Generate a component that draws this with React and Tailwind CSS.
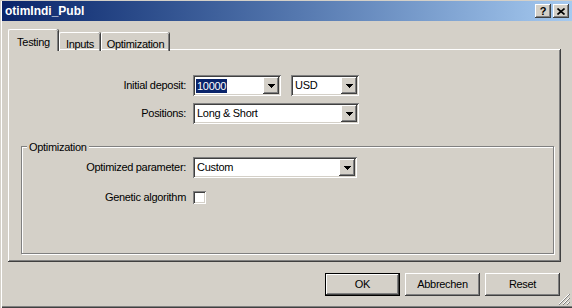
import React from "react";

const raised =
  "shadow-[inset_-1px_-1px_0_#404040,inset_1px_1px_0_#ffffff,inset_-2px_-2px_0_#808080,inset_2px_2px_0_#D4D0C8]";
const sunken =
  "shadow-[inset_1px_1px_0_#808080,inset_-1px_-1px_0_#ffffff,inset_2px_2px_0_#404040,inset_-2px_-2px_0_#D4D0C8]";

function Arrow() {
  return (
    <svg width="7" height="4" viewBox="0 0 7 4">
      <path d="M0 0h7v1H0zM1 1h5v1H1zM2 2h3v1H2zM3 3h1v1H3z" fill="#000" />
    </svg>
  );
}

function Combo({ className, value, selected }) {
  return (
    <div className={`flex h-[21px] items-stretch bg-white p-[2px] ${sunken} ${className}`}>
      <div className="flex flex-1 items-center pl-[1px]">
        {selected ? (
          <span className="bg-[#0A246A] px-[1px] leading-[14px] text-white">{value}</span>
        ) : (
          <span className="pl-[1px]">{value}</span>
        )}
      </div>
      <div className={`flex w-[16px] items-center justify-center bg-[#D4D0C8] ${raised}`}>
        <Arrow />
      </div>
    </div>
  );
}

function Button({ children, primary }) {
  const inner = (
    <div className={`flex h-full w-full items-center justify-center bg-[#D4D0C8] ${raised}`}>
      {children}
    </div>
  );
  return primary ? (
    <div className="h-[23px] w-[75px] border border-black">{inner}</div>
  ) : (
    <div className="h-[23px] w-[75px]">{inner}</div>
  );
}

export default function App() {
  return (
    <div className="relative flex h-[308px] w-[572px] flex-col overflow-hidden bg-[#D4D0C8] pl-[2px] pt-[1px] font-['Liberation_Sans',Arial,sans-serif] text-[11px] tracking-[-0.3px] text-black shadow-[inset_1px_1px_0_#D4D0C8,inset_2px_2px_0_#ffffff,inset_0_-1px_0_#404040,inset_0_-2px_0_#808080]">
      {/* Title bar */}
      <div className="flex h-[20px] items-center justify-between bg-gradient-to-r from-[#0A246A] to-[#A6CAF0] pl-[3px] pr-[3px]">
        <span className="text-[12px] font-bold tracking-normal text-white">otimIndi_Publ</span>
        <div className="flex gap-[2px]">
          <div className={`flex h-[14px] w-[16px] items-center justify-center bg-[#D4D0C8] ${raised}`}>
            <span className="text-[11px] font-bold leading-none">?</span>
          </div>
          <div className={`flex h-[14px] w-[16px] items-center justify-center bg-[#D4D0C8] ${raised}`}>
            <svg width="8" height="7" viewBox="0 0 8 7">
              <path d="M0.5 0.5L7.5 6.5M7.5 0.5L0.5 6.5" stroke="#000" strokeWidth="1.6" />
            </svg>
          </div>
        </div>
      </div>

      {/* Tabs + panel */}
      <div className="ml-[6px] mt-[8px] w-[553px]">
        <div className="relative z-10 -mb-[2px] flex h-[22px] items-end">
          <div className="flex h-[22px] w-[50px] items-start justify-center rounded-t-[2px] border-l border-t border-white bg-[#D4D0C8] pt-[4px] shadow-[inset_-1px_0_0_#808080,1px_0_0_#404040]">
            Testing
          </div>
          <div className="ml-[1px] flex h-[19px] w-[41px] items-start justify-center rounded-t-[2px] border-l border-t border-white pt-[3px] shadow-[inset_-1px_0_0_#808080,1px_0_0_#404040]">
            Inputs
          </div>
          <div className="ml-[1px] flex h-[19px] w-[68px] items-start justify-center rounded-t-[2px] border-l border-t border-white pt-[3px] shadow-[inset_-1px_0_0_#808080,1px_0_0_#404040]">
            Optimization
          </div>
        </div>
        <div className={`h-[213px] w-[553px] pt-[26px] ${raised}`}>
          <div className="flex items-center">
            <div className="w-[179px] pr-[1px] text-right">Initial deposit:</div>
            <Combo className="ml-[6px] w-[88px]" value="10000" selected />
            <Combo className="ml-[10px] w-[68px]" value="USD" />
          </div>
          <div className="mt-[7px] flex items-center">
            <div className="w-[179px] pr-[1px] text-right">Positions:</div>
            <Combo className="ml-[6px] w-[166px]" value="Long & Short" />
          </div>

          {/* Group box */}
          <div className="relative ml-[13px] mt-[22px] h-[108px] w-[533px] border border-[#808080] pt-[10px] shadow-[inset_1px_1px_0_#ffffff,1px_1px_0_#ffffff]">
            <span className="absolute -top-[8px] left-[5px] bg-[#D4D0C8] px-[2px]">Optimization</span>
            <div className="flex items-center">
              <div className="w-[165px] pr-[1px] text-right">Optimized parameter:</div>
              <Combo className="ml-[6px] w-[164px]" value="Custom" />
            </div>
            <div className="mt-[11px] flex items-center">
              <div className="w-[165px] pr-[1px] text-right">Genetic algorithm</div>
              <div className={`ml-[6px] h-[13px] w-[13px] bg-white ${sunken}`} />
            </div>
          </div>
        </div>

        {/* Buttons */}
        <div className="mt-[11px] flex justify-end gap-[5px] pr-[1px]">
          <Button primary>OK</Button>
          <Button>Abbrechen</Button>
          <Button>Reset</Button>
        </div>
      </div>

      {/* Resize grip */}
      <svg className="absolute bottom-[3px] right-[2px]" width="12" height="12" viewBox="0 0 12 12">
        <path d="M11 1L1 11M11 5L5 11M11 9L9 11" stroke="#ffffff" strokeWidth="1" />
        <path d="M12 1L1 12M12 5L5 12M12 9L9 12" stroke="#808080" strokeWidth="1" />
      </svg>
    </div>
  );
}
